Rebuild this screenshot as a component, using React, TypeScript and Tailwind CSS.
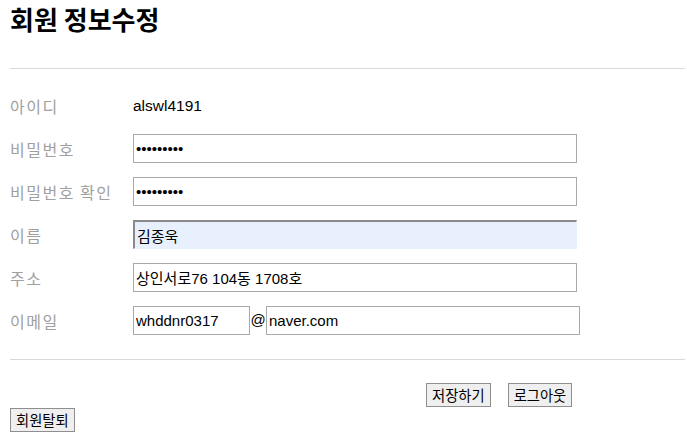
import React from "react";

const kr = { fontFamily: '"Noto Sans CJK KR", "Noto Sans", sans-serif' };
const inp = { fontFamily: '"Liberation Sans", "Noto Sans CJK KR", sans-serif' };

function Label({ children }: { children: React.ReactNode }) {
  return (
    <div className="w-[123px] shrink-0 text-[16px] tracking-[1.5px] text-[#a0a0a0] leading-none" style={kr}>
      {children}
    </div>
  );
}

function Field({ value, type = "text", w = "w-[444px]", extra = "border border-[#a9a9a9] bg-white" }: { value: string; type?: string; w?: string; extra?: string }) {
  return (
    <input
      type={type}
      defaultValue={value}
      readOnly
      className={`${w} h-[29px] px-[2px] text-[15px] text-black outline-none ${extra}`}
      style={inp}
    />
  );
}

const btn = "h-[24px] px-[5px] border border-[#8f8f8f] bg-[#efefef] text-[14.3px] text-black leading-none";

export default function App() {
  return (
    <div className="w-[687px] h-[443px] bg-white overflow-hidden px-[10px]">
      <h1 className="text-[26px] font-bold text-black leading-none pt-[6px]" style={kr}>
        회원 정보수정
      </h1>
      <div className="mt-[36px] h-px bg-[#d9d9d9] w-[675px]" />
      <div className="mt-[15px] flex flex-col">
        <div className="h-[43px] flex items-center">
          <Label>아이디</Label>
          <div className="text-[15.5px] text-black" style={inp}>alswl4191</div>
        </div>
        <div className="h-[43px] flex items-center">
          <Label>비밀번호</Label>
          <Field type="password" value="123456789" />
        </div>
        <div className="h-[43px] flex items-center">
          <Label>비밀번호 확인</Label>
          <Field type="password" value="123456789" />
        </div>
        <div className="h-[43px] flex items-center">
          <Label>이름</Label>
          <Field value="김종욱" extra="bg-[#e8f0fe] border-t-2 border-l-2 border-r border-b border-t-[#8a8a8a] border-l-[#8a8a8a] border-r-[#e8f0fe] border-b-[#e8f0fe]" />
        </div>
        <div className="h-[43px] flex items-center">
          <Label>주소</Label>
          <Field value="상인서로76 104동 1708호" />
        </div>
        <div className="h-[43px] flex items-center">
          <Label>이메일</Label>
          <Field value="whddnr0317" w="w-[117px]" />
          <span className="w-[16px] text-center text-[15px] text-black" style={inp}>@</span>
          <Field value="naver.com" w="w-[314px]" />
        </div>
      </div>
      <div className="mt-[17px] h-px bg-[#d9d9d9] w-[675px]" />
      <div className="mt-[23px] flex pl-[416px] gap-[17px]">
        <button className={btn} style={kr}>저장하기</button>
        <button className={btn} style={kr}>로그아웃</button>
      </div>
      <div className="mt-[1px]">
        <button className={btn} style={kr}>회원탈퇴</button>
      </div>
    </div>
  );
}
